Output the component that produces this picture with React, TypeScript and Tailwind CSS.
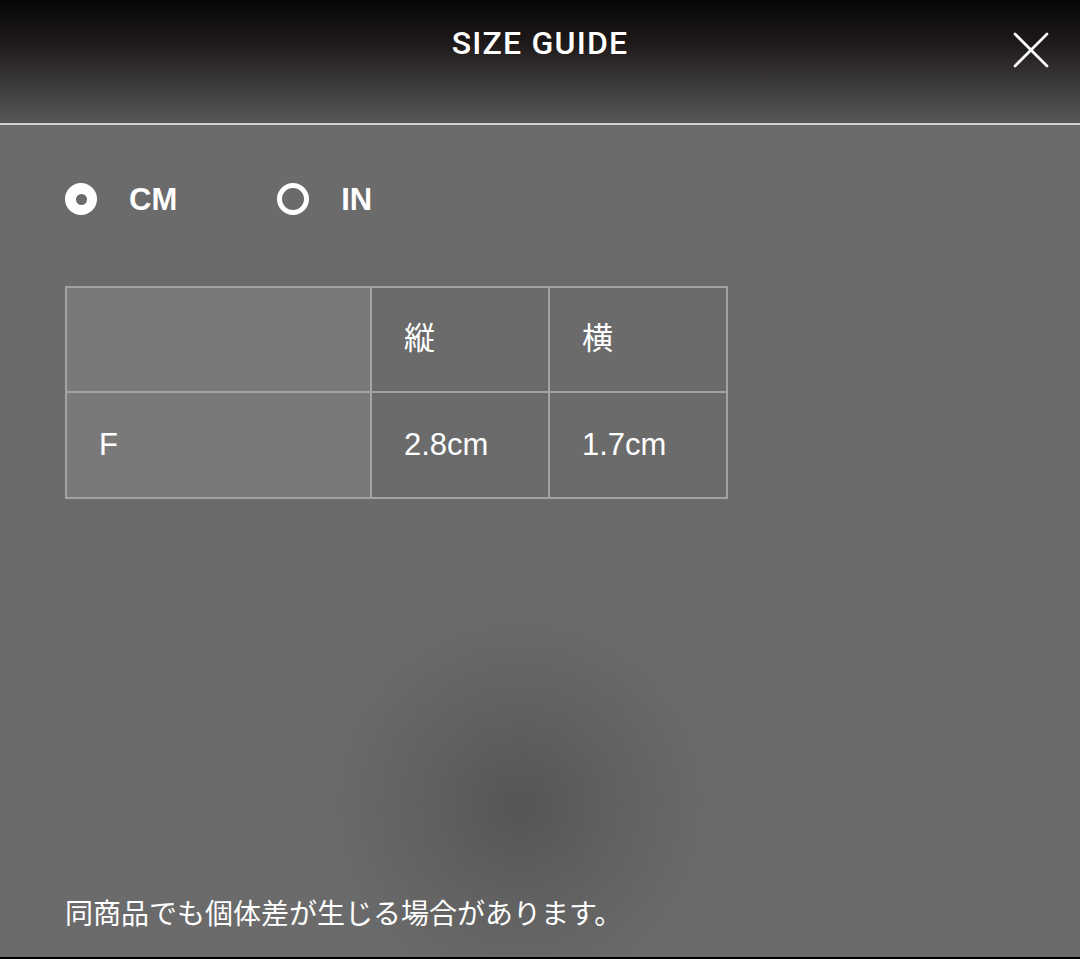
import { X } from 'lucide-react';

const FONT = 'font-["Liberation_Sans","Noto_Sans_CJK_JP",sans-serif]';

function Radio({ checked, label }: { checked: boolean; label: string }) {
  return (
    <label className="flex items-center gap-[32px]">
      <span
        className={
          checked
            ? 'flex h-[32px] w-[32px] items-center justify-center rounded-full bg-white'
            : 'h-[32px] w-[32px] rounded-full border-[5px] border-white'
        }
      >
        {checked ? <span className="h-[11px] w-[11px] rounded-full bg-[#6b6b6b]" /> : null}
      </span>
      <span className="text-[31px] font-bold leading-none text-white">{label}</span>
    </label>
  );
}

const cell = 'border-2 border-[#a3a3a3] px-[32px] align-middle text-[31px] text-white';

export default function App() {
  return (
    <div className={`${FONT} flex h-[959px] w-[1080px] flex-col overflow-hidden bg-[#6b6b6b]`}>
      <header className="relative flex h-[123px] shrink-0 items-start justify-center bg-[linear-gradient(to_bottom,#050505,#1e1a19_35%,#575757)] pt-[25px]">
        <h1 className='font-["Roboto",sans-serif] text-[32px] font-medium leading-[36px] tracking-[1.2px] text-white'>SIZE GUIDE</h1>
        <button className="absolute right-[17px] top-[18px] text-white">
          <X className="h-[64px] w-[64px]" strokeWidth={1} />
        </button>
      </header>
      <div className="h-[2px] shrink-0 bg-[#d2d2d2]" />
      <main className="flex flex-1 flex-col bg-[radial-gradient(circle_at_520px_680px,#555555_0,#606060_90px,#6b6b6b_200px)] px-[65px] pb-[28px]">
        <div className="mt-[58px] flex items-center gap-[100px]">
          <Radio checked label="CM" />
          <Radio checked={false} label="IN" />
        </div>
        <table className="mt-[71px] w-[663px] border-collapse">
          <tbody>
            <tr className="h-[105px]">
              <td className={`${cell} w-[305px] bg-[#797979]`} />
              <td className={`${cell} w-[178px]`}>縦</td>
              <td className={`${cell}`}>横</td>
            </tr>
            <tr className="h-[106px]">
              <td className={`${cell} bg-[#797979]`}>F</td>
              <td className={`${cell}`}>2.8cm</td>
              <td className={`${cell}`}>1.7cm</td>
            </tr>
          </tbody>
        </table>
        <p className="mt-auto text-[28px] leading-none text-white">同商品でも個体差が生じる場合があります。</p>
      </main>
      <div className="h-[2px] shrink-0 bg-black" />
    </div>
  );
}
